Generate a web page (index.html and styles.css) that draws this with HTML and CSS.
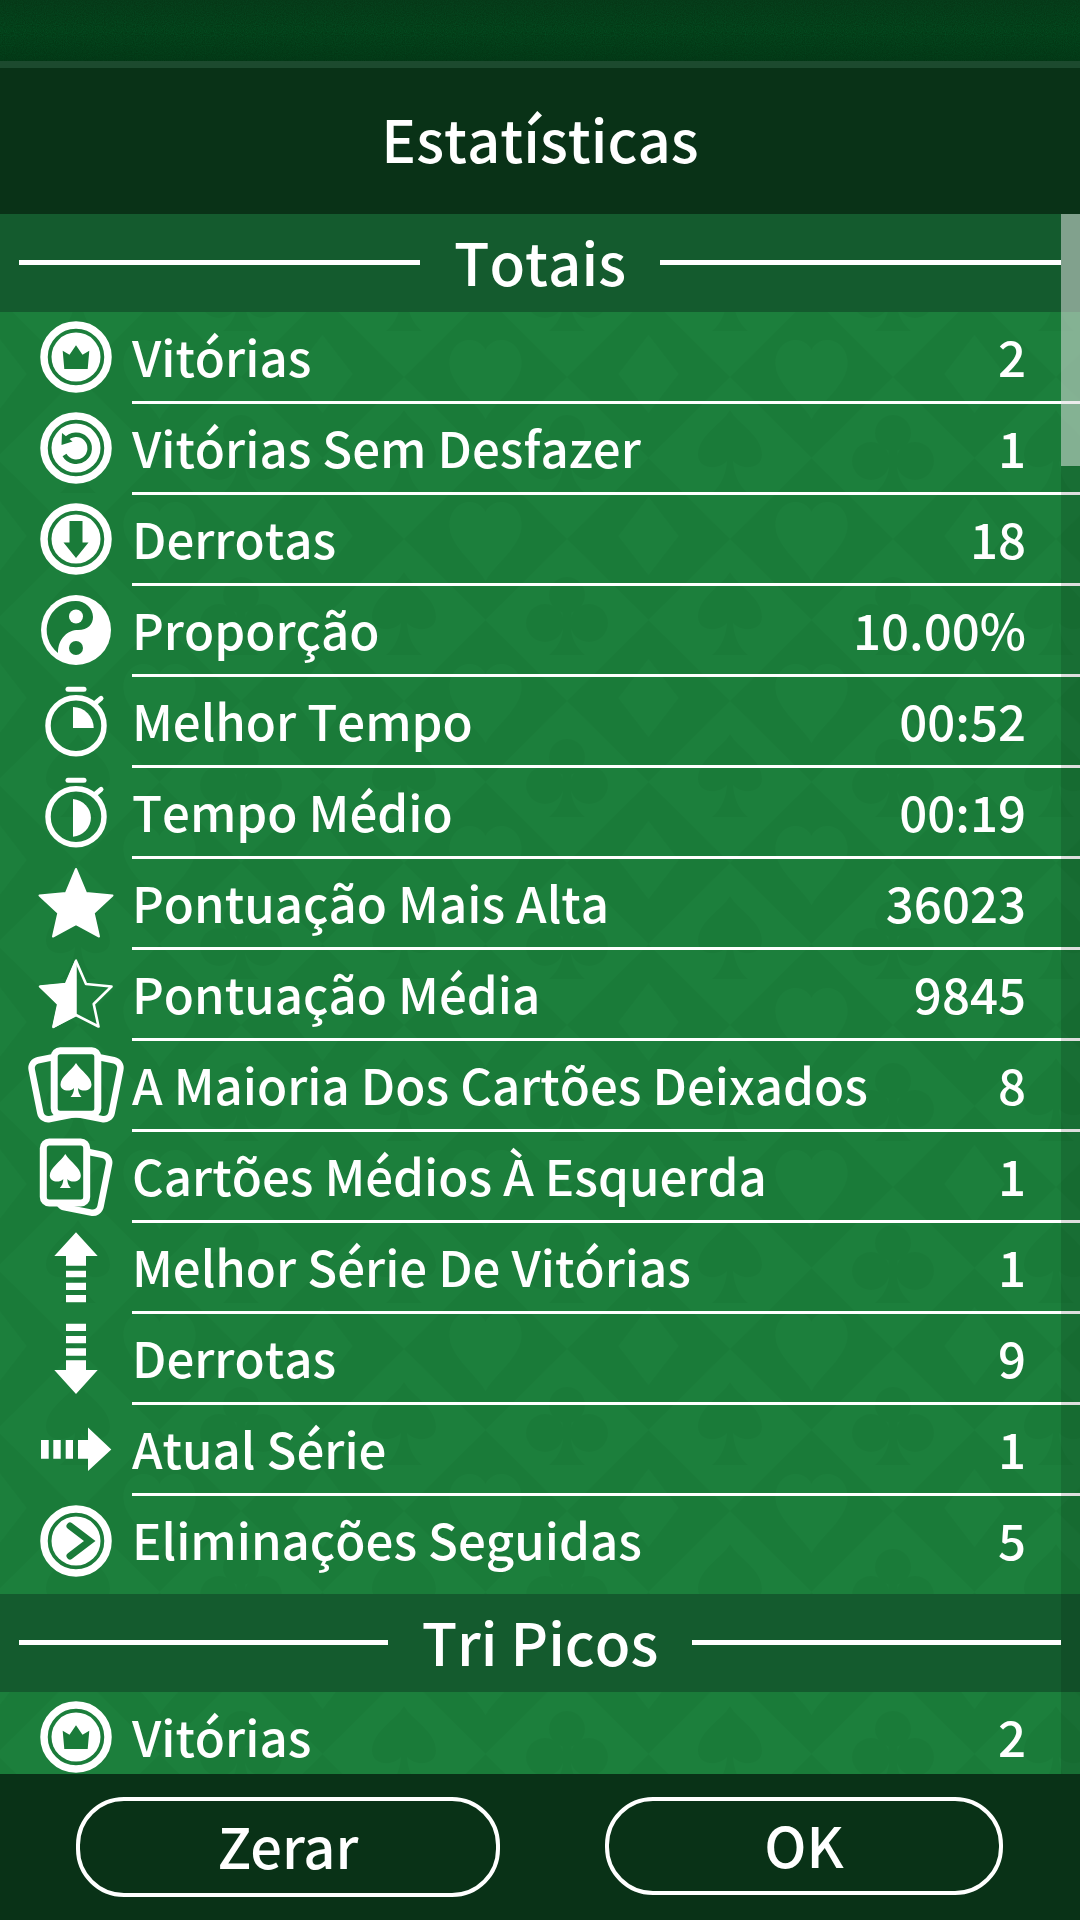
FILE: index.html

```html
<!DOCTYPE html>
<html lang="pt-BR">
<head>
    <meta charset="UTF-8">
    <meta name="viewport" content="width=device-width, initial-scale=1.0">
    <title>Estatísticas</title>
    <link rel="stylesheet" href="styles.css">
</head>
<body>
    <svg class="defs" width="0" height="0">
        <defs>
            <g id="ring">
                <circle r="32" fill="none" stroke="#fff" stroke-width="7.5"/>
                <circle r="24.5" fill="#fff"/>
            </g>
            <path id="spade" d="M0 -22C-5 -14 -15.5 -8 -15.5 -.5C-15.5 6 -6 7.5 -2 3C-2 7 -3.5 10 -5.5 12L5.5 12C3.5 10 2 7 2 3C6 7.5 15.5 6 15.5 -.5C15.5 -8 5 -14 0 -22Z" fill="#fff"/>
            <g id="watch" fill="none" stroke="#fff">
                <circle cy="4.7" r="28" stroke-width="5.5"/>
                <path d="M-8 -31.8H8" stroke-width="5" stroke-linecap="round"/>
                <path d="M19 -17.7L25 -22.7" stroke-width="5" stroke-linecap="round"/>
            </g>
            <g id="crown">
                <use href="#ring"/>
                <path d="M-13.3 -6.3L-6.5 -2.3L0 -11.7L6.5 -2.3L13.3 -6.3L11.7 12H-11.7Z" fill="#1a7b39"/>
            </g>
        </defs>
    </svg>

    <div class="top-band"></div>
    <div class="top-edge"></div>
    <header class="title">Estatísticas</header>

    <main class="list">
        <section class="group">
            <h2 class="group-head"><span>Totais</span></h2>

            <div class="row">
                <svg class="ico" viewBox="-55 -44 110 91"><use href="#crown"/></svg>
                <div class="row-body"><span>Vitórias</span><span>2</span></div>
            </div>
            <div class="row">
                <svg class="ico" viewBox="-55 -44 110 91">
                    <use href="#ring"/>
                    <path d="M-10.5 -8A13.5 13.5 0 1 1 -11.5 7" fill="none" stroke="#1a7b39" stroke-width="4.5"/>
                    <path d="M-14 -15L-14.5 -3L-3.5 -6.5Z" fill="#1a7b39"/>
                </svg>
                <div class="row-body"><span>Vitórias Sem Desfazer</span><span>1</span></div>
            </div>
            <div class="row">
                <svg class="ico" viewBox="-55 -44 110 91">
                    <use href="#ring"/>
                    <path d="M-6.5 -18H6.5V3.5H12.5L0 19L-12.5 3.5H-6.5Z" fill="#1a7b39"/>
                </svg>
                <div class="row-body"><span>Derrotas</span><span>18</span></div>
            </div>
            <div class="row">
                <svg class="ico" viewBox="-55 -44 110 91">
                    <circle r="35" fill="#fff"/>
                    <path d="M0 -29A29 29 0 0 0 -18 23C-18 8 -8 0 2 0C12 0 17 -6 17 -13C17 -22 9 -29 0 -29Z" fill="#1a7b39"/>
                    <circle cy="-13.5" r="7" fill="#fff"/>
                    <circle cy="18" r="7" fill="#1a7b39"/>
                </svg>
                <div class="row-body"><span>Proporção</span><span>10.00%</span></div>
            </div>
            <div class="row">
                <svg class="ico" viewBox="-55 -44 110 91">
                    <use href="#watch"/>
                    <path d="M-3 -14A20.7 21 0 0 1 17.7 7H-3Z" fill="#fff"/>
                </svg>
                <div class="row-body"><span>Melhor Tempo</span><span>00:52</span></div>
            </div>
            <div class="row">
                <svg class="ico" viewBox="-55 -44 110 91">
                    <use href="#watch"/>
                    <path d="M-3 -13A20.5 19 0 0 1 -3 24.7Z" fill="#fff"/>
                </svg>
                <div class="row-body"><span>Tempo Médio</span><span>00:19</span></div>
            </div>
            <div class="row">
                <svg class="ico" viewBox="-55 -44 110 91">
                    <path d="M0 -34L10 -10L36.5 -7.5L17.7 10L23 33.5L0 21L-23 33.5L-17.7 10L-36.5 -7.5L-10 -10Z" fill="#fff" stroke="#fff" stroke-width="2" stroke-linejoin="round"/>
                </svg>
                <div class="row-body"><span>Pontuação Mais Alta</span><span>36023</span></div>
            </div>
            <div class="row">
                <svg class="ico" viewBox="-55 -44 110 91">
                    <path d="M0 -33L10 -10L35.5 -7.5L17.7 10L22.5 32.5L0 21L-22.5 32.5L-17.7 10L-35.5 -7.5L-10 -10Z" fill="none" stroke="#fff" stroke-width="2.6" stroke-linejoin="round"/>
                    <path d="M0 -34V21L-23 33.5L-17.7 10L-36.5 -7.5L-10 -10Z" fill="#fff" stroke="#fff" stroke-width="1.5" stroke-linejoin="round"/>
                </svg>
                <div class="row-body"><span>Pontuação Média</span><span>9845</span></div>
            </div>
            <div class="row">
                <svg class="ico" viewBox="-55 -44 110 91">
                    <rect x="-40.4" y="-28" width="43" height="60" rx="8" transform="rotate(-11.3 -18.9 2)" fill="none" stroke="#fff" stroke-width="6.5"/>
                    <rect x="-2.6" y="-28" width="43" height="60" rx="8" transform="rotate(11.3 18.9 2)" fill="none" stroke="#fff" stroke-width="6.5"/>
                    <rect x="-21.8" y="-34.3" width="43.6" height="63.5" rx="6" fill="#1a7b39" stroke="#fff" stroke-width="7"/>
                    <use href="#spade"/>
                </svg>
                <div class="row-body"><span>A Maioria Dos Cartões Deixados</span><span>8</span></div>
            </div>
            <div class="row">
                <svg class="ico" viewBox="-55 -44 110 91">
                    <rect x="-13.8" y="-24.4" width="43" height="59" rx="8" transform="rotate(11.3 7.7 5.1)" fill="none" stroke="#fff" stroke-width="6.5"/>
                    <rect x="-32.7" y="-34" width="43.4" height="61" rx="6" fill="#1a7b39" stroke="#fff" stroke-width="7"/>
                    <use href="#spade" x="-10.7"/>
                </svg>
                <div class="row-body"><span>Cartões Médios À Esquerda</span><span>1</span></div>
            </div>
            <div class="row">
                <svg class="ico" viewBox="-55 -44 110 91">
                    <path d="M0 -34.7L21.7 -11H10V-1.3H-10V-11H-21.7ZM-10 3.7H10V10.3H-10ZM-10 15.7H10V23H-10ZM-10 28H10V35.3H-10Z" fill="#fff"/>
                </svg>
                <div class="row-body"><span>Melhor Série De Vitórias</span><span>1</span></div>
            </div>
            <div class="row">
                <svg class="ico" viewBox="-55 -44 110 91">
                    <path d="M-10 -34.3H10V-27H-10ZM-10 -22H10V-14.7H-10ZM-10 -9.7H10V-2.3H-10ZM-10 2.3H10V12H21.7L0 36L-21.7 12H-10Z" fill="#fff"/>
                </svg>
                <div class="row-body"><span>Derrotas</span><span>9</span></div>
            </div>
            <div class="row">
                <svg class="ico" viewBox="-55 -44 110 91">
                    <path d="M-35 -9H-27.3V9.7H-35ZM-22.7 -9H-15.3V9.7H-22.7ZM-10.3 -9H-3V9.7H-10.3ZM2 -9H12V-21.5L35.3 .5L12 22V9.7H2Z" fill="#fff"/>
                </svg>
                <div class="row-body"><span>Atual Série</span><span>1</span></div>
            </div>
            <div class="row row-last">
                <svg class="ico" viewBox="-55 -44 110 91">
                    <use href="#ring" y="1"/>
                    <path d="M-6 -14L13.7 1L-6 16" fill="none" stroke="#1a7b39" stroke-width="7" stroke-linecap="round" stroke-linejoin="miter"/>
                </svg>
                <div class="row-body"><span>Eliminações Seguidas</span><span>5</span></div>
            </div>
        </section>

        <section class="group">
            <h2 class="group-head"><span>Tri Picos</span></h2>

            <div class="row">
                <svg class="ico" viewBox="-55 -44 110 91"><use href="#crown"/></svg>
                <div class="row-body"><span>Vitórias</span><span>2</span></div>
            </div>
        </section>

        <div class="scrollbar"><div class="thumb"></div></div>
    </main>

    <footer class="actions">
        <button class="btn btn-reset">Zerar</button>
        <button class="btn btn-ok">OK</button>
    </footer>
</body>
</html>
```

FILE: styles.css

```css
* {
    box-sizing: border-box;
}

body {
    margin: 0;
    width: 1080px;
    height: 1920px;
    overflow: hidden;
    background-color: #093217;
    color: #fff;
    font-family: "Noto Sans CJK JP", "Noto Sans", sans-serif;
    font-weight: 500;
    font-kerning: none;
    display: flex;
    flex-direction: column;
}

.defs {
    position: absolute;
}

.top-band {
    height: 61px;
    flex: none;
    background-color: #033a15;
    background-image:
        linear-gradient(#09321766, #09321700 50%, #02301280),
        url("data:image/svg+xml,%3Csvg xmlns='http://www.w3.org/2000/svg' width='200' height='61'%3E%3Cfilter id='n'%3E%3CfeTurbulence type='fractalNoise' baseFrequency='.9' numOctaves='2'/%3E%3CfeColorMatrix values='0 0 0 0 0 0 0 0 0 .35 0 0 0 0 .1 0 0 0 .3 -.08'/%3E%3C/filter%3E%3Crect width='200' height='61' filter='url(%23n)'/%3E%3C/svg%3E");
}

.top-edge {
    height: 7px;
    flex: none;
    background-color: #1c4a2e;
}

.title {
    height: 146px;
    flex: none;
    display: flex;
    align-items: center;
    justify-content: center;
    padding-bottom: 6px;
    font-size: 58px;
    line-height: 1;
}

.list {
    position: relative;
    height: 1560px;
    flex: none;
    overflow: hidden;
    background-color: #1a7b39;
    background-position: 78px 1px;
    background-image: url("data:image/svg+xml,%3Csvg xmlns='http://www.w3.org/2000/svg' xmlns:xlink='http://www.w3.org/1999/xlink' width='326' height='162' viewBox='0 0 326 162'%3E%3Cdefs%3E%3Cpath id='h' d='M0 40C-8 24-36 6-36-16C-36-30-26-39-16-39C-9-39-3-35 0-29C3-35 9-39 16-39C26-39 36-30 36-16C36 6 8 24 0 40Z'/%3E%3Cpath id='d' d='M0-39L30 0L0 39L-30 0Z'/%3E%3C/defs%3E%3Cg fill='%231c7f3c'%3E%3Cpath d='M0 0L81.5 81L0 162L-81.5 81Z'/%3E%3Cpath d='M326 0L407.5 81L326 162L244.5 81Z'/%3E%3Cpath d='M163 0L244.5 81L163 162L81.5 81Z'/%3E%3Cuse xlink:href='%23h' x='81.5' y='2'/%3E%3Cuse xlink:href='%23h' x='81.5' y='164'/%3E%3Cuse xlink:href='%23d' x='244.5' y='-3'/%3E%3Cuse xlink:href='%23d' x='244.5' y='159'/%3E%3C/g%3E%3Cg fill='%231a7b39'%3E%3Cpath id='s' d='M0 33C-8 47-32 58-32 78C-32 92-12 94-3 84C-4 96-8 108-18 116L18 116C8 108 4 96 3 84C12 94 32 92 32 78C32 58 8 47 0 33Z'/%3E%3Cuse xlink:href='%23s' x='326'/%3E%3Cg transform='translate(163 0)'%3E%3Ccircle cy='56' r='18'/%3E%3Ccircle cx='-22' cy='84' r='19'/%3E%3Ccircle cx='22' cy='84' r='19'/%3E%3Cpath d='M-5 60H5L4 90C5 100 9 108 18 116L-18 116C-9 108-5 100-4 90Z'/%3E%3C/g%3E%3C/g%3E%3C/svg%3E");
}

.group-head {
    height: 98px;
    margin: 0;
    padding: 0 19px 4px;
    background-color: #145b2e;
    display: flex;
    align-items: center;
    gap: 34px;
    font-size: 58px;
    font-weight: 500;
    line-height: 1;
}

.group-head::before,
.group-head::after {
    content: "";
    flex: 1;
    height: 5px;
    margin-top: 3px;
    background-color: #fff;
}

.row {
    height: 91px;
    display: flex;
}

.group-head + .row {
    height: 92px;
    padding-top: 1px;
}

.row-last {
    height: 98px;
    padding-bottom: 7px;
}

.ico {
    flex: none;
    width: 110px;
    height: 91px;
    margin-left: 20.5px;
    overflow: visible;
}

.row-body {
    flex: 1;
    margin-left: 1.5px;
    padding: 0 54px 3px 0;
    display: flex;
    align-items: center;
    justify-content: space-between;
    border-bottom: 3px solid #fff;
    font-size: 49.2px;
    line-height: 1;
}

.row-last .row-body {
    border-bottom: none;
    padding-bottom: 6px;
}

.scrollbar {
    position: absolute;
    top: 0;
    right: 0;
    bottom: 0;
    width: 19px;
    background-color: rgba(0, 0, 0, 0.13);
}

.thumb {
    height: 252px;
    background-color: rgba(255, 255, 255, 0.47);
}

.actions {
    height: 146px;
    flex: none;
    padding: 23px 0 0 76px;
    display: flex;
    align-items: flex-start;
    gap: 105px;
}

.btn {
    height: 100px;
    padding: 0 0 4px;
    border: 4px solid #fff;
    border-radius: 48px;
    background: none;
    color: #fff;
    font-family: inherit;
    font-weight: 500;
    font-size: 56px;
    line-height: 1;
}

.btn-reset {
    width: 424px;
}

.btn-ok {
    width: 398px;
    height: 98px;
}
```
